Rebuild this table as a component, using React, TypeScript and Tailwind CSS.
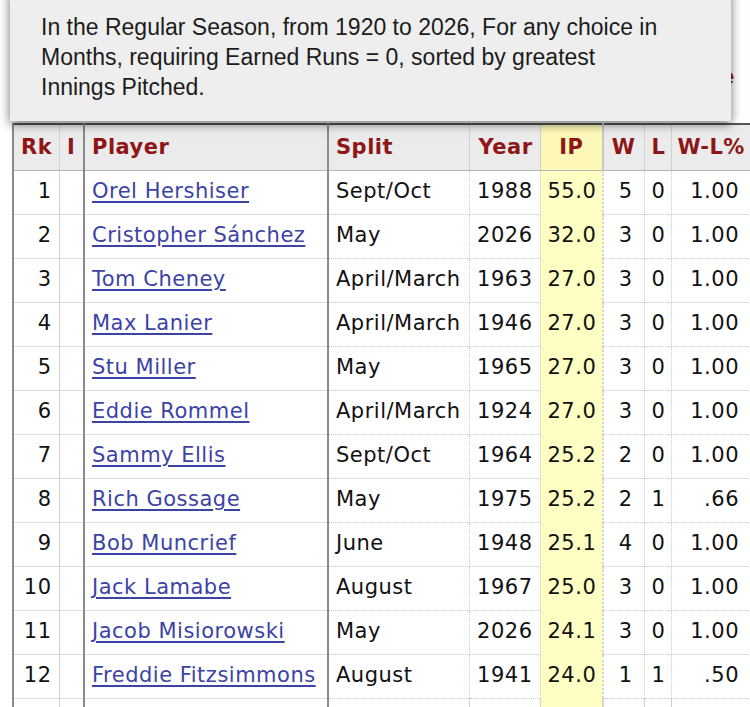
import React from "react";

type Row = {
  rk: number;
  player: string;
  split: string;
  year: number;
  ip: string;
  w: number;
  l: number;
  pct: string;
};

const rows: Row[] = [
  { rk: 1, player: "Orel Hershiser", split: "Sept/Oct", year: 1988, ip: "55.0", w: 5, l: 0, pct: "1.00" },
  { rk: 2, player: "Cristopher Sánchez", split: "May", year: 2026, ip: "32.0", w: 3, l: 0, pct: "1.00" },
  { rk: 3, player: "Tom Cheney", split: "April/March", year: 1963, ip: "27.0", w: 3, l: 0, pct: "1.00" },
  { rk: 4, player: "Max Lanier", split: "April/March", year: 1946, ip: "27.0", w: 3, l: 0, pct: "1.00" },
  { rk: 5, player: "Stu Miller", split: "May", year: 1965, ip: "27.0", w: 3, l: 0, pct: "1.00" },
  { rk: 6, player: "Eddie Rommel", split: "April/March", year: 1924, ip: "27.0", w: 3, l: 0, pct: "1.00" },
  { rk: 7, player: "Sammy Ellis", split: "Sept/Oct", year: 1964, ip: "25.2", w: 2, l: 0, pct: "1.00" },
  { rk: 8, player: "Rich Gossage", split: "May", year: 1975, ip: "25.2", w: 2, l: 1, pct: ".66" },
  { rk: 9, player: "Bob Muncrief", split: "June", year: 1948, ip: "25.1", w: 4, l: 0, pct: "1.00" },
  { rk: 10, player: "Jack Lamabe", split: "August", year: 1967, ip: "25.0", w: 3, l: 0, pct: "1.00" },
  { rk: 11, player: "Jacob Misiorowski", split: "May", year: 2026, ip: "24.1", w: 3, l: 0, pct: "1.00" },
  { rk: 12, player: "Freddie Fitzsimmons", split: "August", year: 1941, ip: "24.0", w: 1, l: 1, pct: ".50" },
];

const th = "h-[46px] px-[7px] font-bold text-[#8e1616] bg-[#ebebeb] border-b border-b-[#b5b5b5] whitespace-nowrap";
const td = "h-[44px] px-[7px] whitespace-nowrap border-b border-dotted border-b-[#c8c8c8]";

export default function App() {
  return (
    <div className="relative w-[750px] h-[707px] overflow-hidden bg-white">
      {/* text underneath the tooltip, only its tail peeks out */}
      <span className="absolute left-[722px] top-[60px] text-[22px] font-bold text-[#a01818] [font-family:'Liberation_Sans',sans-serif]">
        e
      </span>

      <table
        className="absolute left-[12px] top-[123px] table-fixed border-collapse text-[21px] tracking-[0.5px] text-[#111] [font-family:'DejaVu_Sans',sans-serif]"
        style={{ width: 748 }}
      >
        <colgroup>
          <col className="w-[46px]" />
          <col className="w-[25px]" />
          <col className="w-[244px]" />
          <col className="w-[141px]" />
          <col className="w-[71px]" />
          <col className="w-[63px]" />
          <col className="w-[41px]" />
          <col className="w-[27px]" />
          <col className="w-[90px]" />
        </colgroup>
        <thead>
          <tr className="border-t-2 border-t-[#555]">
            <th className={`${th} text-right border-l-2 border-l-[#8a8a8a] border-r border-r-[#d0d0d0]`}>Rk</th>
            <th className={`${th} text-center px-0 border-r-2 border-r-[#8a8a8a]`}>I</th>
            <th className={`${th} text-left border-r-2 border-r-[#8a8a8a]`}>Player</th>
            <th className={`${th} text-left border-r border-r-[#d0d0d0]`}>Split</th>
            <th className={`${th} text-right border-r border-r-[#d0d0d0]`}>Year</th>
            <th className={`${th} text-center !bg-[#fdf8b8] border-r-2 border-r-[#c9c9c9]`}>IP</th>
            <th className={`${th} text-right pr-[8px] border-r border-r-[#d0d0d0]`}>W</th>
            <th className={`${th} text-center px-0 border-r border-r-[#d0d0d0]`}>L</th>
            <th className={`${th} text-left pl-[6px] pr-0 overflow-hidden`}>W-L%</th>
          </tr>
        </thead>
        <tbody>
          {rows.map((r) => (
            <tr key={r.rk}>
              <td className={`${td} !border-solid !border-b-[#dcdcdc] text-right border-l-2 border-l-[#8a8a8a] border-r border-r-[#d0d0d0]`}>
                {r.rk}
              </td>
              <td className={`${td} !border-solid !border-b-[#dcdcdc] border-r-2 border-r-[#8a8a8a]`} />
              <td className={`${td} !border-solid !border-b-[#dcdcdc] text-left border-r-2 border-r-[#8a8a8a]`}>
                <a href="#" className="text-[#3b43a6] underline underline-offset-[3px]">
                  {r.player}
                </a>
              </td>
              <td className={`${td} text-left border-r border-r-[#d0d0d0]`}>{r.split}</td>
              <td className={`${td} text-right border-r border-r-[#d0d0d0]`}>{r.year}</td>
              <td className={`${td} text-right bg-[#ffffc4] !border-b-[#ffffc4] border-r-2 border-r-[#d5d5d5]`}>{r.ip}</td>
              <td className={`${td} text-right pr-[11px] border-r border-r-[#d0d0d0]`}>{r.w}</td>
              <td className={`${td} text-center px-0 border-r border-r-[#d0d0d0]`}>{r.l}</td>
              <td className={`${td} text-right pr-[22px]`}>{r.pct}</td>
            </tr>
          ))}
          <tr>
            <td className="h-[44px] border-l-2 border-l-[#8a8a8a] border-r border-r-[#d0d0d0]" />
            <td className="border-r-2 border-r-[#8a8a8a]" />
            <td className="border-r-2 border-r-[#8a8a8a]" />
            <td className="border-r border-r-[#d0d0d0]" />
            <td className="border-r border-r-[#d0d0d0]" />
            <td className="bg-[#ffffc4] border-r-2 border-r-[#d5d5d5]" />
            <td className="border-r border-r-[#d0d0d0]" />
            <td className="border-r border-r-[#d0d0d0]" />
            <td />
          </tr>
        </tbody>
      </table>

      {/* tooltip */}
      <div className="absolute left-[10px] top-[-10px] w-[721px] h-[131px] bg-[#eeeeee] shadow-[0_3px_10px_rgba(0,0,0,0.55)] pt-[22px] pl-[31px]">
        <p className="whitespace-nowrap text-[23px] leading-[30px] text-[#1c1c1c] [font-family:'Liberation_Sans',sans-serif]">
          In the Regular Season, from 1920 to 2026, For any choice in
          <br />
          Months, requiring Earned Runs = 0, sorted by greatest
          <br />
          Innings Pitched.
        </p>
      </div>
    </div>
  );
}
